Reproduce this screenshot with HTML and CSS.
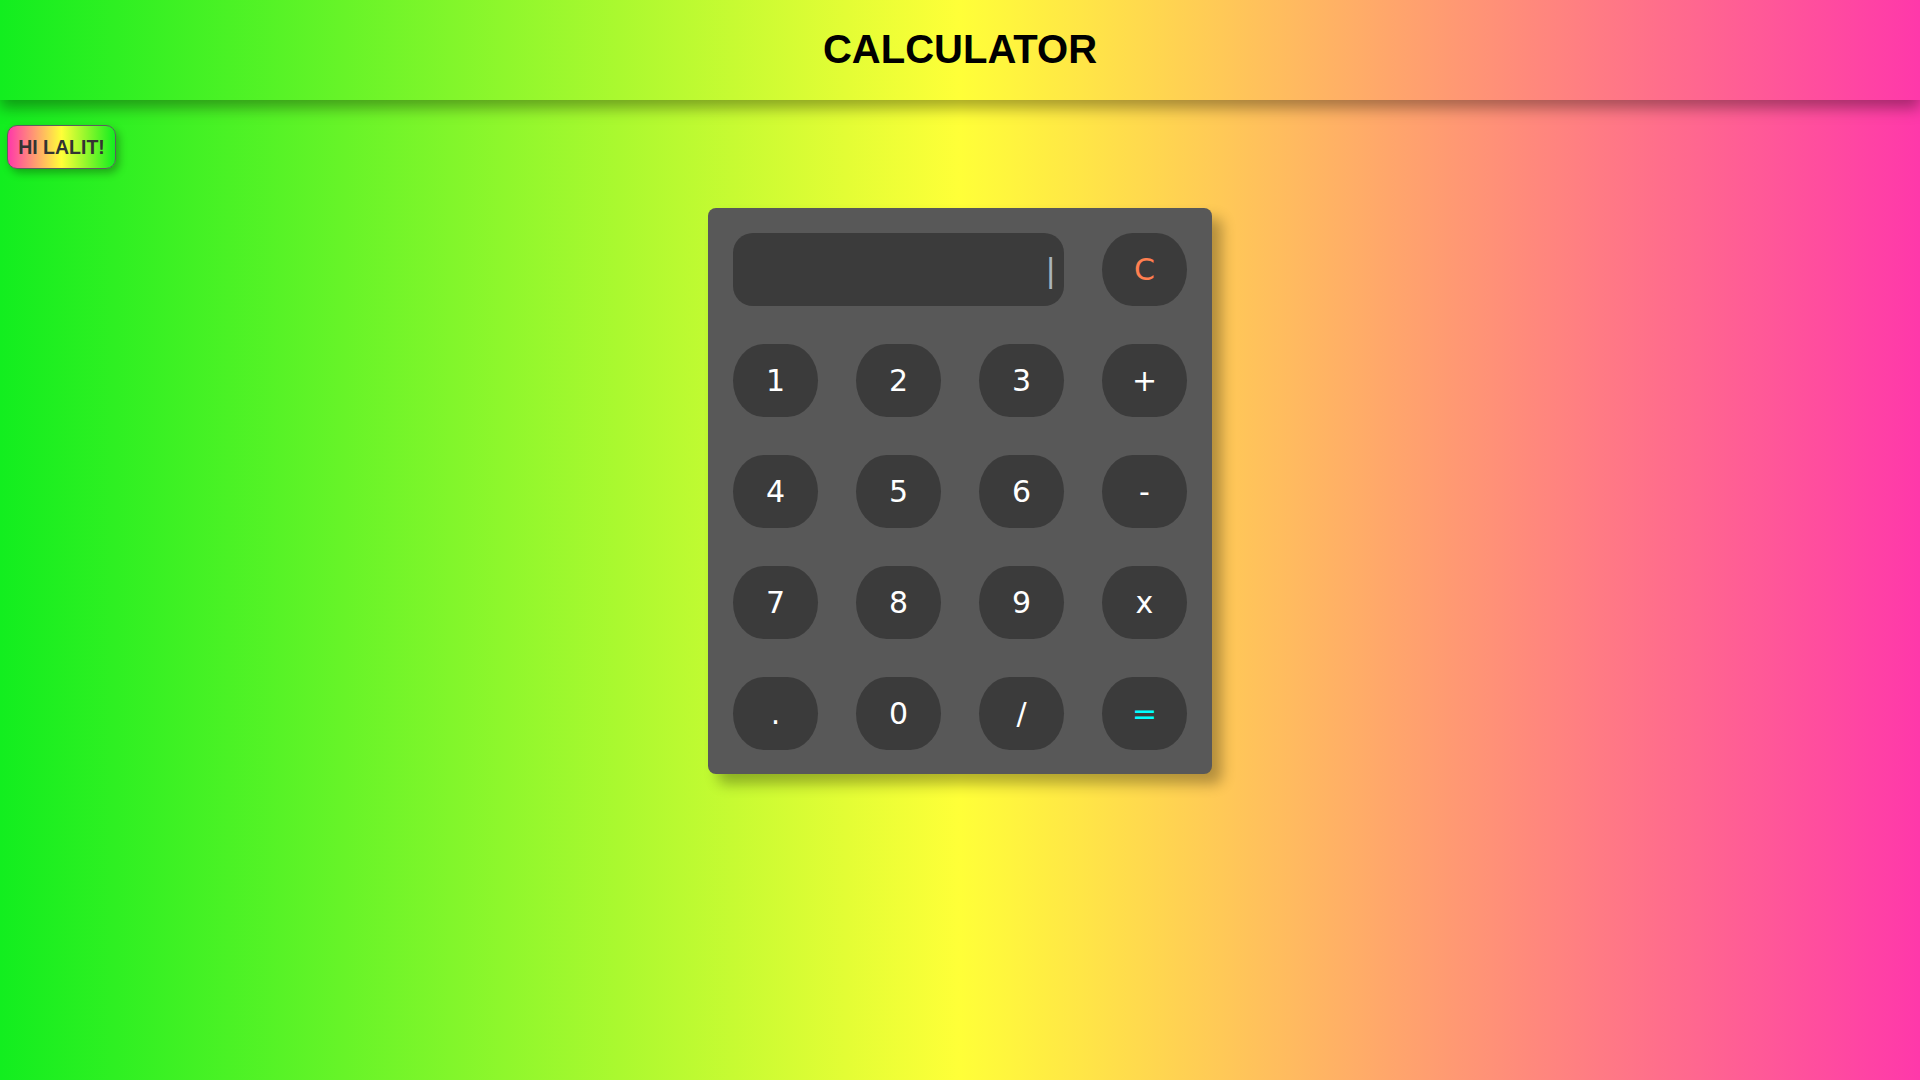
FILE: index.html
```html
<!DOCTYPE html>
<html>
<head>
<meta charset="utf-8">
<title>Calculator</title>
<link rel="stylesheet" href="styles.css">
</head>
<body>
<header class="topbar">
  <h1 class="title">CALCULATOR</h1>
</header>
<main class="page">
  <div class="greet-row">
    <button class="greet">HI LALIT!</button>
  </div>
  <div class="calc">
    <div class="display"><span class="caret">|</span></div>
    <button class="key key-clear">C</button>
    <button class="key">1</button>
    <button class="key">2</button>
    <button class="key">3</button>
    <button class="key">+</button>
    <button class="key">4</button>
    <button class="key">5</button>
    <button class="key">6</button>
    <button class="key">-</button>
    <button class="key">7</button>
    <button class="key">8</button>
    <button class="key">9</button>
    <button class="key">x</button>
    <button class="key">.</button>
    <button class="key">0</button>
    <button class="key">/</button>
    <button class="key key-eq">=</button>
  </div>
</main>
</body>
</html>
```
FILE: styles.css
```css
html, body {
  margin: 0;
  padding: 0;
  height: 100%;
}
body {
  background: linear-gradient(to right, #12ee1f 0%, #ffff38 50%, #ff38aa 100%);
  font-family: "Liberation Sans", Arial, sans-serif;
  min-height: 1080px;
}
.topbar {
  height: 100px;
  display: flex;
  align-items: center;
  justify-content: center;
  background: linear-gradient(to right, #12ee1f 0%, #ffff38 50%, #ff38aa 100%);
  box-shadow: 0 8px 14px rgba(0, 0, 0, 0.35);
  position: relative;
  z-index: 1;
}
.title {
  margin: 0;
  font-size: 40px;
  font-weight: bold;
  color: #000;
  padding-bottom: 1px;
}
.page {
  padding: 25px 0 0 7px;
}
.greet-row {
  display: flex;
}
.greet {
  width: 109px;
  height: 44px;
  border: 1px solid #5e5e5e;
  border-radius: 10px;
  background: linear-gradient(to right, #ff38aa 0%, #ffff38 50%, #12ee1f 100%);
  color: #333;
  font-family: "Liberation Sans", Arial, sans-serif;
  font-weight: bold;
  font-size: 19.5px;
  padding: 0;
  box-shadow: 3px 4px 8px rgba(0, 0, 0, 0.3);
}
.calc {
  width: 454px;
  margin: 39px 0 0 701px;
  padding: 25px 25px 24px 25px;
  background: #585858;
  border-radius: 8px;
  box-shadow: 10px 10px 14px rgba(0, 0, 0, 0.3);
  display: grid;
  grid-template-columns: repeat(4, 85px);
  grid-auto-rows: 73px;
  column-gap: 38px;
  row-gap: 38px;
}
.display {
  grid-column: span 3;
  background: #3b3b3b;
  border-radius: 20px;
  display: flex;
  align-items: center;
  justify-content: flex-end;
  padding-right: 8px;
}
.caret {
  font-family: "DejaVu Sans", sans-serif;
  font-size: 32px;
  color: #a9b4bd;
}
.key {
  border: none;
  border-radius: 36% / 50%;
  background: #3b3b3b;
  color: #fff;
  font-family: "DejaVu Sans", Verdana, sans-serif;
  font-size: 30px;
  padding: 0;
}
.key-clear {
  color: #ff7f50;
}
.key-eq {
  color: #00ffff;
}
```
